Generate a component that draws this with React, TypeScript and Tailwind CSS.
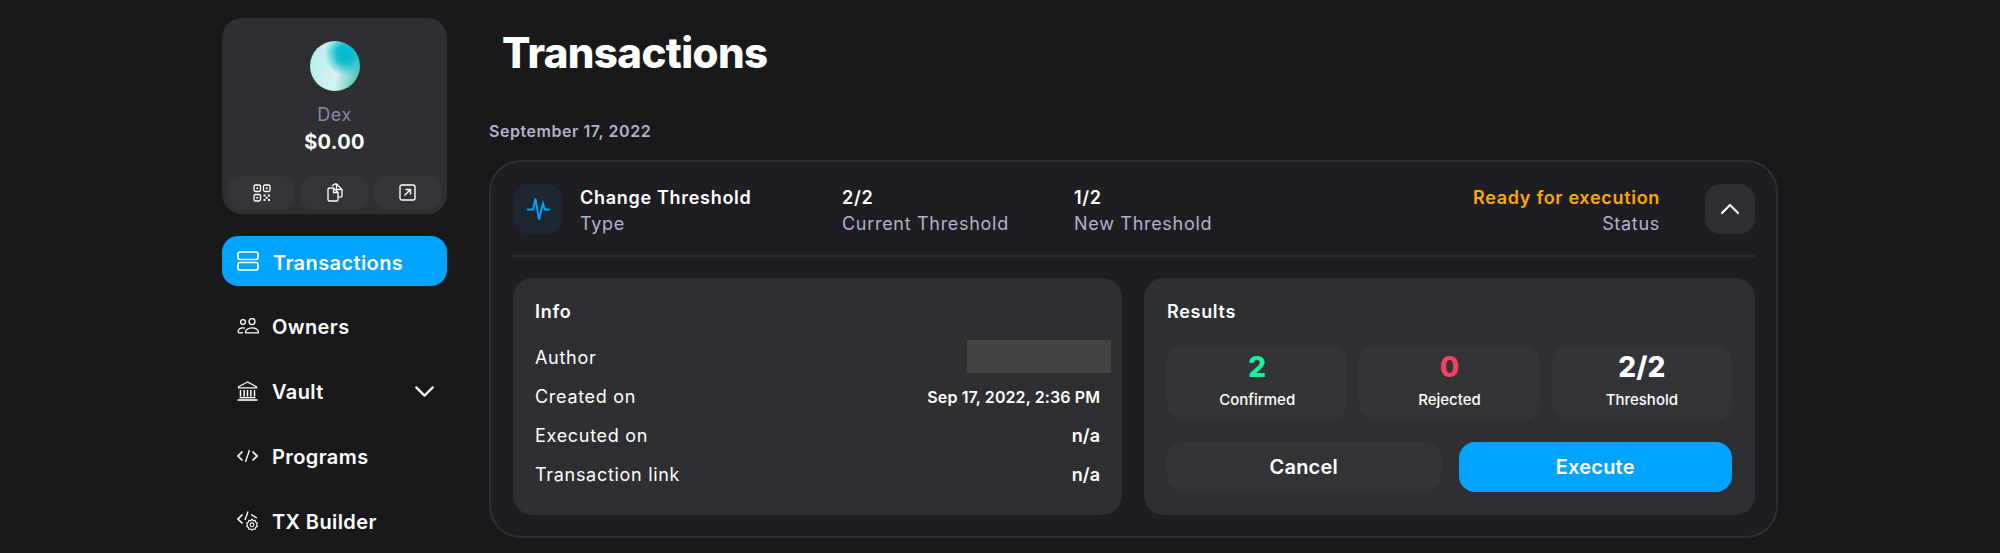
import { ChevronDown, ChevronUp } from 'lucide-react';

// nav icons drawn by hand, the packages don't have these shapes
function TxIcon() {
  return (
    <svg width="22" height="20" viewBox="0 0 22 20" fill="none" stroke="white" strokeWidth="1.7">
      <rect x="1" y="1" width="20" height="7.5" rx="2" />
      <rect x="1" y="11.5" width="20" height="7.5" rx="2" />
    </svg>
  );
}

function OwnersIcon() {
  return (
    <svg width="22" height="16" viewBox="0 0 22 16" fill="none" stroke="white" strokeWidth="1.3">
      <circle cx="6" cy="4" r="2.4" />
      <circle cx="15" cy="3.6" r="3" />
      <path d="M1 14.6c0-3 2-4.8 5-4.8 .7 0 1.3.1 1.9.3" />
      <path d="M8.6 14.8c-.4-3 2.6-5 6.4-5s6.8 2 6.4 5z" />
      <path d="M1 14.8h5" />
    </svg>
  );
}

function VaultIcon() {
  return (
    <svg width="21" height="20" viewBox="0 0 21 20" fill="none" stroke="white" strokeWidth="1.3">
      <path d="M10.5 1 1.5 5.8v1h18v-1z" />
      <path d="M3.5 9v6.5M7.2 9v6.5M10.5 9v6.5M13.8 9v6.5M17.5 9v6.5" strokeWidth="1.5" />
      <path d="M2.5 16.6h16" />
      <path d="M.5 19h20" strokeWidth="1.6" />
    </svg>
  );
}

function CodeIcon() {
  return (
    <svg width="21" height="14" viewBox="0 0 21 14" fill="none" stroke="white" strokeWidth="1.6">
      <path d="M5.5 2.5 1 7l4.5 4.5" />
      <path d="M15.5 2.5 20 7l-4.5 4.5" />
      <path d="M12.5 1 8.5 13" strokeWidth="1.3" />
    </svg>
  );
}

function BuilderIcon() {
  return (
    <svg width="22" height="20" viewBox="0 0 22 20" fill="none" stroke="white" strokeWidth="1.4">
      <path d="M5.5 3.5 1 8l4.5 4.5" strokeWidth="1.6" />
      <path d="M11 .5 8 9" />
      <path d="M14 3.5l6 3.5" strokeWidth="1.4" />
      <path d="M15 8.2l1.2 1.4 1.9-.2.5 1.8 1.7.9-.8 1.7.8 1.7-1.7.9-.5 1.8-1.9-.2-1.2 1.3-1.2-1.3-1.9.2-.5-1.8-1.7-.9.8-1.7-.8-1.7 1.7-.9.5-1.8 1.9.2z" strokeWidth="1.1" />
      <circle cx="15" cy="13.8" r="1.9" strokeWidth="1.1" />
    </svg>
  );
}

function QrIcon() {
  return (
    <svg width="18" height="18" viewBox="0 0 18 18" fill="none" stroke="white" strokeWidth="1.3">
      <rect x="1" y="1" width="6.5" height="6.5" rx="1.5" />
      <rect x="10.5" y="1" width="6.5" height="6.5" rx="1.5" />
      <rect x="1" y="10.5" width="6.5" height="6.5" rx="1.5" />
      <rect x="3.4" y="3.4" width="1.7" height="1.7" fill="white" stroke="none" />
      <rect x="12.9" y="3.4" width="1.7" height="1.7" fill="white" stroke="none" />
      <rect x="3.4" y="12.9" width="1.7" height="1.7" fill="white" stroke="none" />
      <path d="M10.5 10.5h2v2h-2zM15 10.5h2v2h-2zM12.7 12.8h2v2h-2zM10.5 15h2v2h-2zM15 15h2v2h-2z" fill="white" stroke="none" />
    </svg>
  );
}

function CopyIcon() {
  return (
    <svg width="16" height="19" viewBox="0 0 16 19" fill="none" stroke="white" strokeWidth="1.3">
      <path d="M3.5 5H2.6C1.7 5 1 5.7 1 6.6v9.8C1 17.3 1.7 18 2.6 18h6.8c.9 0 1.6-.7 1.6-1.6V9.5L6.5 5z" />
      <path d="M6.5 5v4.5H11" />
      <path d="M5 3 8 1h1.5L15 6.5v6c0 1-.6 1.6-1.5 1.6H11" />
      <path d="M9.5 1v5.5H15" />
    </svg>
  );
}

function OpenIcon() {
  return (
    <svg width="17" height="17" viewBox="0 0 17 17" fill="none" stroke="white" strokeWidth="1.4">
      <rect x="1" y="1" width="15" height="15" rx="2" />
      <path d="M5.5 11.5l5.5-5.5M6.5 5.5H11.5V10.5" />
    </svg>
  );
}

function PulseIcon() {
  return (
    <svg width="23" height="24" viewBox="0 0 23 24" fill="none" stroke="#00a3ff" strokeWidth="2">
      <path d="M0 12.5h6L8.4 1.5 12 22.5l4-16 2 6h5" />
    </svg>
  );
}

const nav = [
  { label: 'Owners', icon: <OwnersIcon /> },
  { label: 'Vault', icon: <VaultIcon />, caret: true },
  { label: 'Programs', icon: <CodeIcon /> },
  { label: 'TX Builder', icon: <BuilderIcon /> },
];

const info = [
  { label: 'Created on', value: 'Sep 17, 2022, 2:36 PM', size: 'text-[16px] tracking-[0.1px]' },
  { label: 'Executed on', value: 'n/a', size: 'text-[18px]' },
  { label: 'Transaction link', value: 'n/a', size: 'text-[18px]' },
];

const stats = [
  { num: '2', label: 'Confirmed', color: 'text-[#14f1a0]' },
  { num: '0', label: 'Rejected', color: 'text-[#f5405f]' },
  { num: '2/2', label: 'Threshold', color: 'text-white' },
];

export default function App() {
  return (
    <div className="flex h-[553px] overflow-hidden bg-[#19191c] pl-[222px] font-['Inter',sans-serif] text-white">
      <aside className="w-[225px] shrink-0 pt-[18px]">
        <div className="flex h-[196px] flex-col items-center rounded-[20px] bg-[#2e2f33] pt-[23px]">
          <div className="h-[50px] w-[50px] rounded-full bg-[radial-gradient(circle_at_72%_26%,#00b8d0_0%,#14c0d0_18%,transparent_42%),linear-gradient(100deg,#b5ece8_0%,#d6f3f2_55%,#35b8aa_100%)]" />
          <div className="mt-[13px] text-[18px] leading-[22px] tracking-[0.5px] text-[#8b8a9e]">Dex</div>
          <div className="mt-[3px] text-[20px] font-bold leading-[26px] tracking-[0.3px]">$0.00</div>
          <div className="mt-auto mb-[5px] flex gap-[6px] self-stretch px-[6px]">
            <button className="flex h-[33px] flex-1 items-center justify-center rounded-[12px] bg-[#343539]"><QrIcon /></button>
            <button className="flex h-[33px] flex-1 items-center justify-center rounded-[12px] bg-[#343539]"><CopyIcon /></button>
            <button className="flex h-[33px] flex-1 items-center justify-center rounded-[12px] bg-[#343539]"><OpenIcon /></button>
          </div>
        </div>
        <div className="mt-[22px] flex h-[50px] items-center gap-[14px] rounded-[16px] bg-[#00a3ff] pl-[15px] text-[20px] font-semibold tracking-[0.4px]">
          <TxIcon />
          <span className="pt-[3px]">Transactions</span>
        </div>
        <nav className="mt-[15px] flex flex-col gap-[15px]">
          {nav.map((n) => (
            <div key={n.label} className="flex h-[50px] items-center pl-[15px] text-[20px] font-semibold tracking-[0.4px]">
              <span className="flex w-[35px] shrink-0 items-center">{n.icon}</span>
              <span className="pt-[2px]">{n.label}</span>
              {n.caret && <ChevronDown className="ml-auto mr-[6px]" size={33} strokeWidth={1.6} />}
            </div>
          ))}
        </nav>
      </aside>

      <main className="ml-[42px] w-[1289px] shrink-0">
        <h1 className="ml-[13px] mt-[25px] text-[42px] font-extrabold leading-[56px] tracking-[-0.6px]">Transactions</h1>
        <div className="mt-[38px] text-[16px] font-semibold leading-[24px] tracking-[0.55px] text-[#b3b1cb]">September 17, 2022</div>
        <section className="mt-[17px] h-[378px] rounded-[32px] border-2 border-[#2e2e35] bg-[#1e1e22] pl-[22px] pr-[21px] pt-[22px]">
          <div className="flex h-[73px] border-b-2 border-[#2e2e35] text-[18px] tracking-[0.7px]">
            <div className="flex h-[50px] w-[50px] shrink-0 items-center justify-center rounded-[16px] bg-[#1c2530]"><PulseIcon /></div>
            <div className="ml-[17px] w-[262px] shrink-0 pt-[1px]">
              <div className="font-semibold leading-[26px]">Change Threshold</div>
              <div className="leading-[25px] text-[#b3b1cb]">Type</div>
            </div>
            <div className="w-[232px] shrink-0 pt-[1px]">
              <div className="font-semibold leading-[26px]">2/2</div>
              <div className="leading-[25px] text-[#b3b1cb]">Current Threshold</div>
            </div>
            <div className="pt-[1px]">
              <div className="font-semibold leading-[26px]">1/2</div>
              <div className="leading-[25px] text-[#b3b1cb]">New Threshold</div>
            </div>
            <div className="ml-auto mr-[45px] pt-[1px] text-right">
              <div className="font-semibold leading-[26px] text-[#ffa800]">Ready for execution</div>
              <div className="leading-[25px] text-[#b3b1cb]">Status</div>
            </div>
            <button className="flex h-[50px] w-[50px] shrink-0 items-center justify-center rounded-[16px] bg-[#2e2f33]">
              <ChevronUp size={32} strokeWidth={1.6} />
            </button>
          </div>

          <div className="mt-[21px] flex gap-[22px]">
            <div className="h-[237px] flex-1 rounded-[20px] bg-[#2e2f33] pl-[22px] pr-[22px] pt-[22px]">
              <div className="text-[18px] font-semibold leading-[24px] tracking-[0.7px]">Info</div>
              <div className="mt-[14px] flex h-[39px] items-center text-[18px] tracking-[0.7px]">
                Author
                <div className="ml-auto mb-[2px] mr-[-11px] h-[33px] w-[144px] bg-[#444444]" />
              </div>
              {info.map((row) => (
                <div key={row.label} className="flex h-[39px] items-center justify-between text-[18px]">
                  <span className="tracking-[0.7px]">{row.label}</span>
                  <span className={`font-semibold ${row.size}`}>{row.value}</span>
                </div>
              ))}
            </div>
            <div className="h-[237px] flex-1 rounded-[20px] bg-[#2e2f33] px-[23px] pt-[22px]">
              <div className="text-[18px] font-semibold leading-[24px] tracking-[0.7px]">Results</div>
              <div className="mt-[21px] flex gap-[12px]">
                {stats.map((s) => (
                  <div key={s.label} className="flex h-[75px] flex-1 flex-col items-center rounded-[16px] bg-[#333438] pt-[6px]">
                    <div className={`text-[28px] font-extrabold leading-[32px] ${s.color}`}>{s.num}</div>
                    <div className="mt-[7px] text-[15px] font-medium leading-[20px]">{s.label}</div>
                  </div>
                ))}
              </div>
              <div className="mt-[22px] flex gap-[18px]">
                <button className="h-[50px] flex-1 rounded-[16px] bg-[#333438] text-[20px] font-semibold tracking-[0.2px]">Cancel</button>
                <button className="h-[50px] flex-1 rounded-[16px] bg-[#00a3ff] text-[20px] font-semibold tracking-[0.2px]">Execute</button>
              </div>
            </div>
          </div>
        </section>
      </main>
    </div>
  );
}
